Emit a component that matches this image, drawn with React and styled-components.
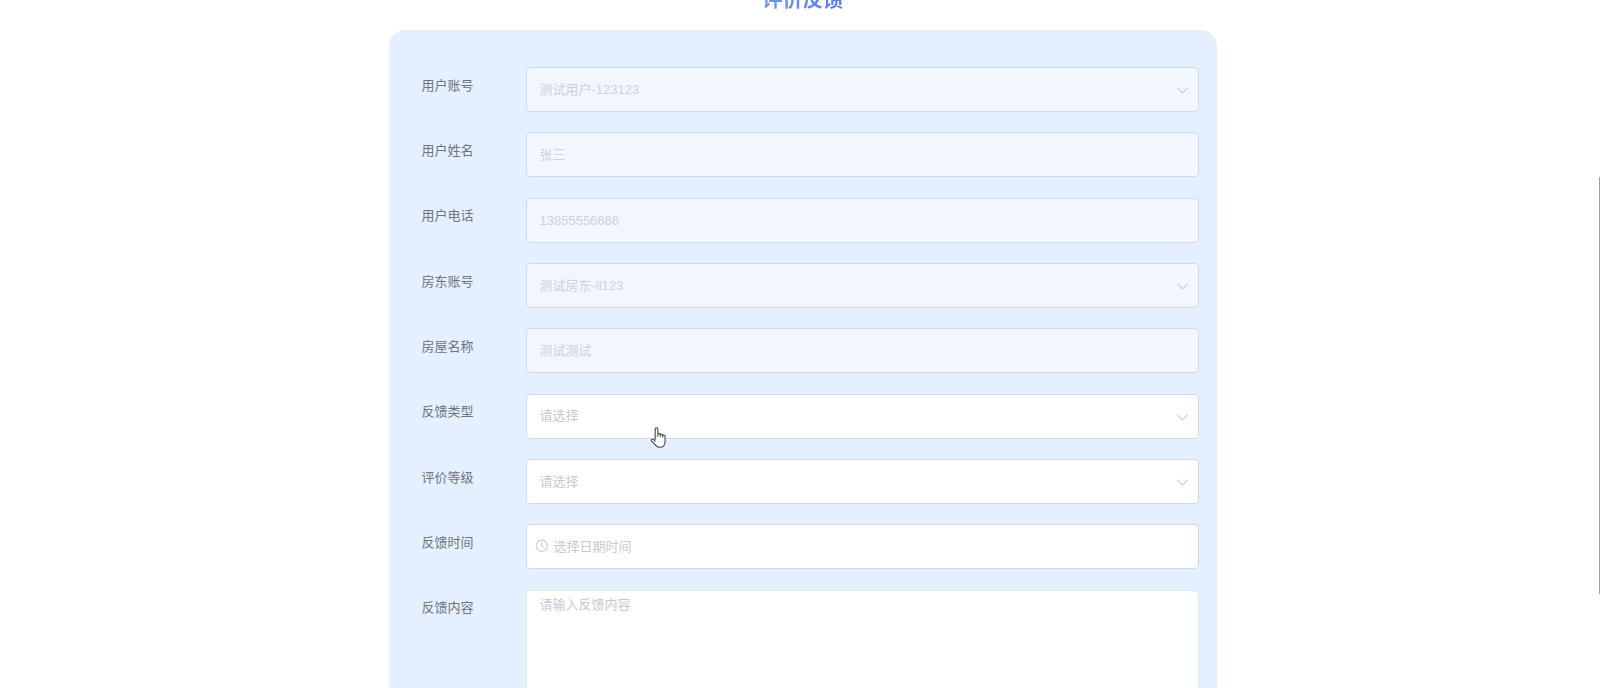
import React from "react";
import styled, { createGlobalStyle } from "styled-components";
import { ChevronDown, Clock } from "lucide-react";

const FIELDS = [
  { label: "用户账号", text: "测试用户-123123", disabled: true, arrow: true },
  { label: "用户姓名", text: "张三", disabled: true },
  { label: "用户电话", text: "13855556666", disabled: true },
  { label: "房东账号", text: "测试房东-ll123", disabled: true, arrow: true },
  { label: "房屋名称", text: "测试测试", disabled: true },
  { label: "反馈类型", text: "请选择", arrow: true },
  { label: "评价等级", text: "请选择", arrow: true },
  { label: "反馈时间", text: "选择日期时间", clock: true },
];

const App = () => (
  <>
    <GlobalStyle />
    <Page>
      <Title>评价反馈</Title>
      <Card>
        {FIELDS.map((field) => (
          <Row key={field.label}>
            <Label>{field.label}</Label>
            <Field $disabled={field.disabled} $clock={field.clock}>
              {field.clock && <ClockIcon size={13.5} strokeWidth={1.9} color="#c9ccd6" />}
              <FieldText $disabled={field.disabled} $clock={field.clock}>
                {field.text}
              </FieldText>
              {field.arrow && <ArrowIcon size={19} strokeWidth={1.4} color="#c9ccd6" />}
            </Field>
          </Row>
        ))}
        <Row>
          <Label>反馈内容</Label>
          <TextArea>请输入反馈内容</TextArea>
        </Row>
      </Card>
    </Page>
    <HandCursor viewBox="0 0 20 24" aria-hidden="true">
      <path
        d="M6.5 14V3.2a1.4 1.4 0 0 1 2.8 0V10.5V9a1.3 1.3 0 0 1 2.6 0v2V9.8a1.3 1.3 0 0 1 2.6 0v1.7-.8a1.2 1.2 0 0 1 2.4 0v5.8c0 3.4-2 5.8-5.4 5.8-2.6 0-4-1-5.3-3L2.6 15.8c-.9-1.4 1-2.8 2.2-1.6L6.5 16"
        fill="#fff"
        stroke="#4a4d55"
        strokeWidth="1.2"
        strokeLinejoin="round"
        strokeLinecap="round"
      />
    </HandCursor>
    <ScrollThumb />
  </>
);

const GlobalStyle = createGlobalStyle`
  html, body {
    margin: 0;
    height: 688px;
    overflow: hidden;
    background: #fff;
    font-family: "Liberation Sans", "Noto Sans CJK SC", sans-serif;
  }
`;

const Page = styled.div`
  width: 828.5px;
  margin: -12.5px 0 0 388.5px;
`;

const Title = styled.h2`
  margin: 0 0 18.5px;
  height: 24px;
  font-size: 20.3px;
  line-height: 24px;
  font-weight: 700;
  text-align: center;
  color: transparent;
  background: linear-gradient(90deg, #8fbdff 32%, #3f53dc 68%);
  -webkit-background-clip: text;
  background-clip: text;
`;

const Card = styled.div`
  padding: 37px 18px 40px 33px;
  background: #e4f0ff;
  border-radius: 16px;
`;

const Row = styled.div`
  display: flex;
  align-items: flex-start;
  margin-bottom: 20.35px;
`;

const Label = styled.div`
  flex: 0 0 104px;
  padding-top: 9.6px;
  font-size: 13px;
  line-height: 18px;
  color: #6f737c;
`;

const Field = styled.div`
  flex: 1;
  display: flex;
  align-items: center;
  box-sizing: border-box;
  height: 45px;
  padding: 0 6px 0 ${({ $clock }) => ($clock ? "8px" : "13px")};
  background: ${({ $disabled }) => ($disabled ? "#f2f6fe" : "#fff")};
  border: 1px solid #d5d8e3;
  border-radius: 4px;
`;

const FieldText = styled.span`
  flex: 1;
  margin-left: ${({ $clock }) => ($clock ? "5.5px" : "0")};
  padding-top: ${({ $disabled }) => ($disabled ? "1px" : "0")};
  font-size: 13px;
  line-height: 18px;
  color: ${({ $disabled }) => ($disabled ? "#cdd1dc" : "#c6c9d2")};
`;

const ArrowIcon = styled(ChevronDown)`
  margin-top: 2px;
`;

const ClockIcon = styled(Clock)`
  margin-top: -2px;
`;

const TextArea = styled.div`
  flex: 1;
  box-sizing: border-box;
  height: 160px;
  padding: 5px 13px;
  background: #fff;
  border: 1px solid #e0e4ee;
  border-radius: 4px;
  font-size: 13px;
  line-height: 18px;
  color: #c6c9d2;
`;

const HandCursor = styled.svg`
  position: fixed;
  left: 649px;
  top: 426px;
  width: 19px;
  height: 23px;
`;

const ScrollThumb = styled.div`
  position: fixed;
  right: 0;
  top: 177px;
  width: 1px;
  height: 417px;
  background: #a5a5a5;
`;

export default App;
